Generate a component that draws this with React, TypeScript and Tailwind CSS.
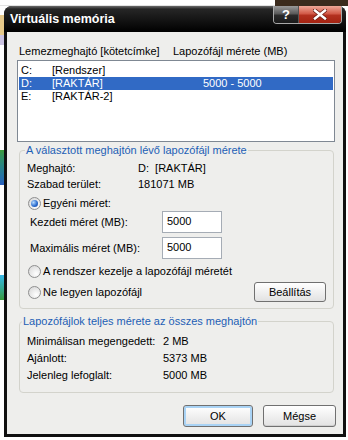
import React from 'react';

function Radio({ checked }: { checked?: boolean }) {
  return (
    <span className="flex h-[13px] w-[13px] shrink-0 items-center justify-center rounded-full border border-[#8e8f8f] bg-[radial-gradient(circle_at_65%_70%,#ffffff,#d3d3d3)]">
      {checked && (
        <span className="h-[7px] w-[7px] rounded-full bg-[radial-gradient(circle_at_35%_35%,#b7dcff,#2f6fd0_55%,#0c3c9a)]" />
      )}
    </span>
  );
}

function Button({ label, width, focused }: { label: string; width: string; focused?: boolean }) {
  return (
    <div
      className={`flex h-[22px] items-center justify-center rounded-[3px] border border-[#707070] bg-linear-to-b from-[#ffffff] to-[#e2e2e2] ${width} ${
        focused ? 'shadow-[inset_0_0_0_2px_#a9d3f5]' : 'shadow-[inset_0_-1px_0_#cfcfcf]'
      }`}
    >
      {label}
    </div>
  );
}

function LeftStrip() {
  return (
    <div className="flex w-[4px] shrink-0 flex-col">
      <div className="h-[9px] bg-white" />
      <div className="h-[20px] bg-[#e6c98a]" />
      <div className="h-[10px] bg-[#cbc3e2]" />
      <div className="h-[105px] bg-white" />
      <div className="h-[35px] bg-linear-to-b from-[#3c9a3a] to-[#2a5fc0]" />
      <div className="h-[90px] bg-white" />
      <div className="h-[25px] bg-linear-to-b from-[#39b7e8] to-[#3a9a3a]" />
      <div className="flex-1 bg-white" />
    </div>
  );
}

function TitleBar() {
  return (
    <div className="flex h-[26px] shrink-0 items-start justify-between rounded-t-[8px] bg-[linear-gradient(to_bottom,#6a6a6a_0px,#262626_3px,#000000_100%)]">
      <span className="self-center pl-[6px] text-[12.5px] font-bold leading-[16px] text-white">Virtuális memória</span>
      <div className="mr-[4px] flex h-[18px] overflow-hidden rounded-b-[4px] border border-t-0 border-[#a9a9a9]">
        <div className="flex w-[25px] items-center justify-center border-r border-[#555] bg-[linear-gradient(to_bottom,#9a9a9a_0%,#5a5a5a_45%,#2a2a2a_55%,#1a1a1a_100%)] text-[13px] font-bold leading-[13px] text-white">
          ?
        </div>
        <div className="flex w-[42px] items-center justify-center bg-[linear-gradient(to_bottom,#f0a898_0%,#d25a48_45%,#b3301f_55%,#a42412_100%)]">
          <svg width="14" height="11" viewBox="0 0 14 11">
            <path d="M2 1.5 L12 9.5 M12 1.5 L2 9.5" stroke="#6b1a10" strokeWidth="4" strokeLinecap="square" />
            <path d="M2 1.5 L12 9.5 M12 1.5 L2 9.5" stroke="#ffffff" strokeWidth="2.5" strokeLinecap="square" />
          </svg>
        </div>
      </div>
    </div>
  );
}

const drives = [
  { letter: 'C:', label: '[Rendszer]', size: '' },
  { letter: 'D:', label: '[RAKTÁR]', size: '5000 - 5000', selected: true },
  { letter: 'E:', label: '[RAKTÁR-2]', size: '' },
];

const totals = [
  { label: 'Minimálisan megengedett:', value: '2 MB' },
  { label: 'Ajánlott:', value: '5373 MB' },
  { label: 'Jelenleg lefoglalt:', value: '5000 MB' },
];

export default function App() {
  return (
    <div className="flex h-[440px] w-[348px] flex-col overflow-hidden bg-white font-['Liberation_Sans',Arial,sans-serif] text-[11px] leading-[13px] text-black">
      <div className="flex h-[6px] shrink-0">
        <div className="flex-1 border-b border-[#e2e2e2]" />
        <div className="w-[73px] bg-[#3b2b1d]" />
      </div>
      <div className="flex flex-1">
        <LeftStrip />
        <div className="flex h-[431px] w-[342px] flex-col rounded-t-[8px] bg-[#101010]">
          <TitleBar />
          <div className="mx-[3px] mb-[3px] flex flex-1 flex-col bg-[#eeeeec]">
            <div className="flex pl-[12px] pt-[13px]">
              <span className="w-[154px]">Lemezmeghajtó [kötetcímke]</span>
              <span>Lapozófájl mérete (MB)</span>
            </div>

            <div className="ml-[10px] mt-[2px] h-[82px] w-[318px] border border-[#7f8893] bg-white p-[1px] pt-[3px]">
              {drives.map((d) => (
                <div
                  key={d.letter}
                  className={`flex h-[13px] pl-[2px] ${d.selected ? 'bg-[#316ac5] text-white' : ''}`}
                >
                  <span className="w-[31px]">{d.letter}</span>
                  <span className="w-[151px]">{d.label}</span>
                  <span>{d.size}</span>
                </div>
              ))}
            </div>

            <fieldset className="ml-[12px] mt-[2px] w-[315px] rounded-[4px] border border-[#d3d3cc] px-[7px] pb-[6px]">
              <legend className="-ml-[2px] px-[1px] leading-[13px] text-[#1d5eb5]">
                A választott meghajtón lévő lapozófájl mérete
              </legend>
              <div className="mt-[5px] flex h-[13px]">
                <span className="w-[111px]">Meghajtó:</span>
                <span className="whitespace-pre">D:  [RAKTÁR]</span>
              </div>
              <div className="mt-[3px] flex h-[13px]">
                <span className="w-[111px]">Szabad terület:</span>
                <span>181071 MB</span>
              </div>
              <div className="mt-[6px] flex h-[13px] items-center gap-[2px] pl-[1px]">
                <Radio checked />
                <span>Egyéni méret:</span>
              </div>
              <div className="mt-[1px] flex h-[22px] items-center pl-[3px]">
                <span className="w-[132px]">Kezdeti méret (MB):</span>
                <div className="h-[22px] w-[60px] border border-[#a5acb5] bg-white pl-[4px] pt-[3px]">5000</div>
              </div>
              <div className="mt-[4px] flex h-[22px] items-center pl-[3px]">
                <span className="w-[132px]">Maximális méret (MB):</span>
                <div className="h-[22px] w-[60px] border border-[#a5acb5] bg-white pl-[4px] pt-[3px]">5000</div>
              </div>
              <div className="mt-[6px] flex h-[13px] items-center gap-[2px] pl-[1px]">
                <Radio />
                <span>A rendszer kezelje a lapozófájl méretét</span>
              </div>
              <div className="mt-[4px] flex h-[20px] items-center justify-between pl-[1px]">
                <div className="flex items-center gap-[2px]">
                  <Radio />
                  <span>Ne legyen lapozófájl</span>
                </div>
                <div className="flex h-[20px] w-[72px] items-center justify-center rounded-[3px] border border-[#707070] bg-linear-to-b from-[#ffffff] to-[#e2e2e2]">
                  Beállítás
                </div>
              </div>
            </fieldset>

            <fieldset className="ml-[12px] mt-[6px] w-[315px] rounded-[4px] border border-[#d3d3cc] px-[7px] pb-[10px]">
              <legend className="-ml-[5px] px-[1px] leading-[13px] text-[#1d5eb5]">
                Lapozófájlok teljes mérete az összes meghajtón
              </legend>
              <div className="mt-[7px] flex flex-col gap-[4px]">
                {totals.map((t) => (
                  <div key={t.label} className="flex h-[13px]">
                    <span className="w-[136px]">{t.label}</span>
                    <span>{t.value}</span>
                  </div>
                ))}
              </div>
            </fieldset>

            <div className="mt-[12px] flex justify-end gap-[10px] pr-[7px]">
              <Button label="OK" width="w-[70px]" focused />
              <Button label="Mégse" width="w-[73px]" />
            </div>
          </div>
        </div>
      </div>
    </div>
  );
}
